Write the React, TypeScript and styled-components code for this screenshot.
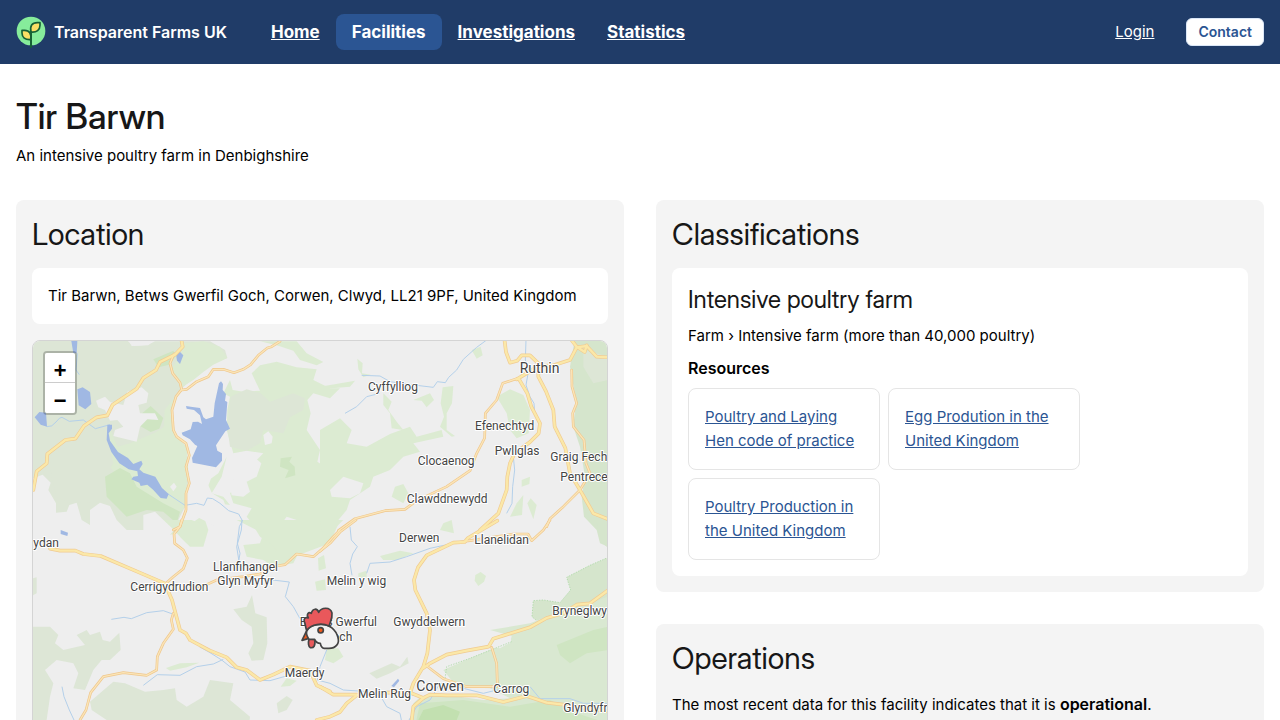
import React from "react";
import styled, { createGlobalStyle } from "styled-components";

const GlobalStyle = createGlobalStyle`
  *, *::before, *::after { box-sizing: border-box; }
  body { margin: 0; background: #fff; color: #000; font-family: Inter, "Liberation Sans", sans-serif; font-size: 15px; line-height: 24px; }
  h1, h2, h3, h4, p, ul { margin: 0; padding: 0; }
  strong { font-size: 16px; font-weight: 600; }
`;

const displayFont = `font-family: "Inter Display", Inter, sans-serif;`;

const TopBar = styled.header`
  display: flex; align-items: center; justify-content: space-between;
  min-height: 64px; padding: 0 16px; background: #203c68; color: #fff;
`;
const BarGroup = styled.div<{ $gap: number }>`
  display: flex; align-items: center; gap: ${(p) => p.$gap}px;
`;
const Brand = styled.a`
  display: flex; align-items: center; gap: 8px;
  color: #fff; font-size: 16px; font-weight: 600; text-decoration: none;
`;
const Nav = styled.nav`display: flex;`;
const NavLink = styled.a<{ $active?: boolean }>`
  padding: 4px 16px; border-radius: 8px; color: #fff;
  font-size: 17px; line-height: 28px; font-weight: 700;
  background: ${(p) => (p.$active ? "#2b5593" : "transparent")};
  text-decoration: ${(p) => (p.$active ? "none" : "underline")};
`;
const LoginLink = styled.a`color: #fff;`;
const ContactButton = styled.button`
  height: 28px; padding: 0 11px; border: 1px solid #dbe7f7; border-radius: 6px;
  background: #fff; color: #2b5593; font: 600 14px/20px Inter, sans-serif;
`;

const Page = styled.main`padding: 32px 16px;`;
const Intro = styled.div`display: flex; flex-direction: column; gap: 8px; margin-bottom: 32px;`;
const Title = styled.h1`${displayFont} font-size: 35px; line-height: 40px; font-weight: 500; color: #171717;`;
const Columns = styled.div`
  display: grid; grid-template-columns: repeat(2, minmax(0, 1fr)); gap: 32px; align-items: start;
`;
const Stack = styled.div`display: flex; flex-direction: column; gap: 32px;`;
const Card = styled.section`
  display: flex; flex-direction: column; gap: 16px; padding: 16px;
  border-radius: 8px; background: #f4f4f4;
`;
const CardTitle = styled.h2`${displayFont} font-size: 30px; line-height: 36px; font-weight: 400; color: #171717;`;
const Panel = styled.div`
  display: flex; flex-direction: column; gap: 8px; padding: 16px; border-radius: 8px; background: #fff;
`;
const PanelTitle = styled.h3`${displayFont} font-size: 24px; line-height: 32px; font-weight: 400; color: #171717;`;
const SmallTitle = styled.h4`font-size: 16px; font-weight: 600;`;
const Resources = styled.ul`display: flex; flex-wrap: wrap; gap: 8px; list-style: none;`;
const Resource = styled.li`
  width: 192px; padding: 16px; border: 1px solid #e5e5e5; border-radius: 8px;
`;
const ResourceLink = styled.a`color: #2b5593;`;

const MapFrame = styled.div`
  position: relative; height: 480px; overflow: hidden;
  border: 1px solid #d4d4d4; border-radius: 8px; background: #eee;
`;
const MapDrawing = styled.svg`display: block; width: 100%; height: 100%;`;
const ZoomControl = styled.div`
  position: absolute; top: 10px; left: 10px; display: flex; flex-direction: column;
  border: 2px solid rgba(0, 0, 0, 0.22); border-radius: 4px; background-clip: padding-box;
`;
const ZoomButton = styled.button`
  width: 30px; height: 30px; padding: 10px 0 0; border: 0; background: #fff; color: #000;
  font: bold 22px/20px "Liberation Mono", monospace;
  &:first-child { border-bottom: 1px solid #ccc; border-radius: 2px 2px 0 0; }
  &:last-child { border-radius: 0 0 2px 2px; }
`;
const PlaceName = styled.text<{ $town?: boolean }>`
  font-family: Roboto, sans-serif; font-size: ${(p) => (p.$town ? 42 : 36)}px;
  fill: #444; stroke: #fff; stroke-width: 6px; stroke-linejoin: round; paint-order: stroke;
`;

const LIGHT = "#dcebd2";
const PARK = "#dde6d6";
const DEEP = "#cfe5c2";
const WATER = "#a0b8e3";

const woods: [string, string][] = [
  // moorland and national park, north west
  [PARK, "M8 30H295L305 48 355 44 375 34H540L585 60 592 84 560 96 520 118 450 180 425 240 436 315 470 350 476 440 465 530 430 600H8Z"],
  [LIGHT, "M460 40L520 34 570 50 592 84 550 104 520 126 490 150 455 172 422 120 455 70Z"],
  [LIGHT, "M238 290L262 350 300 340 375 308 402 290 404 240 432 205 424 250 434 318 470 350 474 400 466 530 440 560 390 525 340 530 300 480 240 410 225 440 190 400 210 350Z"],
  [PARK, "M60 380L150 330 200 300 230 300 240 350 250 400 225 440 230 500 200 515 120 520 80 500 64 440Z"],
  [DEEP, "M225 440L270 414 300 430 320 470 400 520 450 545 440 580 400 545 350 540 290 560 230 500Z"],
  [DEEP, "M370 88L430 62 440 76 418 104 385 112Z"],
  [DEEP, "M322 262L362 228 400 264 388 296 362 306 330 288Z"],
  // forest east of the lake
  [LIGHT, "M600 150L608 180 640 185 690 182 665 130 690 106 740 95 800 112 860 118 850 150 900 175 930 175 900 205 850 190 832 210 842 250 830 300 870 360 862 395 900 420V600H850L835 620 800 570 770 560 740 600 700 620 650 560 665 535 610 520 600 490 640 450 660 410 700 370 650 362 610 370 590 300 592 240 600 200 580 190Z"],
  [PARK, "M602 200L650 178 692 190 720 215 790 190 825 205 820 240 780 262 760 310 700 300 690 340 650 362 600 350 592 290Z"],
  [LIGHT, "M590 380L575 440 545 490 580 500 600 525 560 520 530 455 565 430Z"],
  [DEEP, "M752 385L786 380 778 395 794 410 796 436 765 445 776 420 750 410Z"],
  [LIGHT, "M690 34H800L830 70 880 96 860 106 810 90 790 62 740 46Z"],
  [LIGHT, "M485 580L520 555 535 600 520 650 480 650 450 620Z"],
  // central woods
  [LIGHT, "M870 300L930 265 965 300 950 340 1010 350 1080 312 1140 290 1160 320 1235 300 1240 320 1150 340 1170 365 1120 380 1080 420 1030 440 1020 470 960 510 950 540 900 600 870 640Z"],
  ["#eee", "M900 480L940 440 1000 460 990 490 960 505 905 500Z"],
  [LIGHT, "M1095 470L1120 462 1135 490 1120 520 1085 500Z"],
  [LIGHT, "M1238 172L1270 168 1266 220 1250 250 1250 300 1275 318 1265 320 1230 290 1242 260 1232 220Z"],
  [LIGHT, "M1150 210L1200 190 1212 210 1190 232 1175 212Z"],
  [LIGHT, "M1400 200L1440 178 1480 195 1500 240 1496 310 1460 325 1440 300 1430 250Z"],
  [LIGHT, "M1060 190L1085 215 1075 240 1100 275 1120 300 1085 295 1080 250 1060 225Z"],
  [LIGHT, "M982 86L998 100 996 130 1022 134 1000 142 985 118Z"],
  [LIGHT, "M870 170L975 152 960 170 870 178Z"],
  [LIGHT, "M1325 60L1352 50 1358 76 1340 86Z"],
  [LIGHT, "M1440 560L1460 520 1480 495 1476 555Z"],
  [LIGHT, "M1502 505L1520 525 1510 568 1492 520Z"],
  [LIGHT, "M1240 580L1265 570 1272 610 1230 600Z"],
  [LIGHT, "M1475 450L1500 440 1498 462 1475 470Z"],
  // hills on the eastern edge
  ["#d5e5cc", "M1634 30H1735V650L1710 640 1700 600 1662 560 1655 500 1665 440 1650 350 1630 290 1638 210 1620 110Z"],
  [PARK, "M1660 60L1735 80V150L1690 160 1660 110Z"],
  // southern half
  [PARK, "M280 570H375L370 595 350 618 320 596 310 615 285 600Z"],
  [LIGHT, "M380 570H485L510 580 530 600 520 630 500 648 470 640 440 610 395 620Z"],
  [LIGHT, "M620 570H870L868 610 810 660 790 700 730 710 700 690 650 680 640 645 690 640 700 610Z"],
  [LIGHT, "M660 570H930L900 640 820 670 770 690 720 700 740 660 720 640 690 620Z"],
  [LIGHT, "M864 685L882 675 888 715 866 722Z"],
  [LIGHT, "M855 755L885 748 888 780 860 782Z"],
  [PARK, "M610 838L650 830 666 795 676 850 710 862 712 940 700 990 665 992 655 970 670 940 665 890 635 870Z"],
  [PARK, "M8 890L60 890 85 915 75 940 100 960 165 945 140 915 170 900 180 915 210 905 218 930 240 935 268 908 272 960 240 990 215 990 190 1020 165 1080 130 1075 145 1030 130 1000 80 990 45 1020 70 1060 60 1100 50 1170H8Z"],
  [PARK, "M180 1115L250 1055 285 1060 345 1085 400 1080 435 1075 440 1110 470 1130 520 1100 540 1050 610 1060 600 1110 660 1160 650 1240 170 1260 230 1170 185 1140Z"],
  [LIGHT, "M408 1014L450 1000 508 998 470 1012 420 1022Z"],
  [PARK, "M740 1120L770 1098 788 1110 770 1140 745 1150Z"],
  [LIGHT, "M752 1070L770 1045 800 1052 780 1068Z"],
  [PARK, "M8 745L20 742 20 790 8 796Z"],
  [LIGHT, "M890 955L925 955 940 980 910 1000 885 990Z"],
  [PARK, "M1018 1030L1085 1000 1110 1010 1132 980 1136 1000 1080 1030 1040 1046Z"],
  [LIGHT, "M1336 735L1352 726 1368 738 1362 755 1345 768 1334 752Z"],
  [LIGHT, "M870 570H940L920 590 880 620Z"],
  [LIGHT, "M985 730L1010 722 1010 742 985 745Z"],
  [LIGHT, "M1050 678L1110 662 1150 670 1100 690 1060 690Z"],
  ["#d5e5cc", "M1700 570H1735V655L1710 632 1702 590Z"],
  // Dee valley and Llantysilio
  ["#d5e5cc", "M1735 682L1680 706 1610 742 1622 780 1590 818 1540 810 1510 812 1506 860 1520 872 1540 865 1700 850 1735 800Z"],
  ["#d9e8d1", "M1520 872L1735 800V1280H1140L1150 1120 1170 1102 1250 1095 1360 1110 1440 1105 1380 1075 1280 1070 1240 1020 1320 985 1380 960 1440 940 1445 918 1380 900 1500 880Z"],
  [DEEP, "M1580 945L1690 900 1735 890V960L1670 970 1620 1000 1590 975Z"],
  [DEEP, "M1170 1120L1300 1110 1440 1130 1560 1110 1640 1150 1735 1180V1260H1140Z"],
  ["#c2e0b0", "M1180 1140L1240 1125 1290 1145 1280 1170 1300 1200H1150Z"],
  // clearings
  ["#eee", "M198 212L225 200 240 216 280 225 292 185 335 172 355 190 350 218 325 225 330 250 375 250 385 270 352 268 330 290 320 335 250 318 255 300 280 290 262 270 240 272 225 240 205 232Z"],
  ["#eee", "M290 30H370L355 46 310 48Z"],
  ["#eee", "M8 445L38 434 62 458 55 480 78 520 78 548 110 545 118 525 140 518 155 570 180 585 180 540 210 518 240 528 260 570 290 600 340 600 340 555 375 545 390 560 432 600 400 640H8Z"],
  ["#eee", "M470 350L490 370 520 400 560 410 545 440 530 480 580 510 600 560 560 590 500 560 475 540 478 440Z"],
  ["#eee", "M700 315L715 304 728 320 725 340 705 345Z"],
  ["#eee", "M1390 950L1440 918 1444 935 1410 955Z"],
  ["#eee", "M420 470L432 458 440 470 430 484Z"],
  ["#eee", "M600 470L625 425 680 388 694 400 680 440 650 455 660 485 640 500 605 496Z"],
];

const lakes = [
  "M124 33H142L140 70H130Z",
  "M142 178L158 172 180 186 184 222 166 238 146 226Z",
  "M14 262L28 246 48 248 51 290 32 284Z",
  "M438 72L448 64 460 76 450 102 441 92Z",
  "M567 160L573 154 579 162 578 180 588 192 585 212 592 216 588 270 600 296 586 304 558 346 562 362 576 370 576 392 558 412 488 398 486 384 502 348 495 344 480 328 458 316 455 308 482 298 488 276 504 275 516 282 510 256 492 240 470 236 468 228 482 230 510 234 520 262 528 268 550 260 554 220Z",
  "M232 284L246 284 246 296 236 310 240 332 264 366 294 384 310 402 334 392 338 402 328 418 340 428 376 440 396 474 416 492 410 506 392 504 370 480 352 464 332 468 328 458 304 448 310 440 324 438 322 424 296 418 268 400 244 366 230 330Z",
  "M92 600L114 608 112 618 92 612Z",
  "M1084 1068L1104 1046 1108 1052 1092 1072Z",
];

const rivers = [
  "M51 290Q66 292 78 276T96 262L118 274 160 270 196 296 240 284",
  "M142 70L138 120 148 134",
  "M414 492L465 526 500 520 522 526 532 504 548 506 570 520 596 542 626 552 636 570 634 600 620 650 628 700",
  "M1370 30L1340 52 1300 88 1280 120 1256 142 1246 158 1222 155 1210 172 1160 166 1080 155 1050 138 995 136",
  "M1050 190L1010 200 980 230 945 250",
  "M1488 30L1486 90 1496 120 1488 165 1500 200 1512 220 1514 250 1532 290",
  "M1450 380L1454 420 1448 470 1446 520 1430 550",
  "M244 868L282 862 304 866 350 848 400 842 428 852",
  "M340 1066L382 1034 450 1036 500 1010 550 1002 580 988",
  "M508 950L540 968 575 990 600 1010 645 1026 660 1050 720 1052 790 1032",
  "M96 1070L102 1100 118 1140 132 1170",
  "M638 570L628 590 622 640 630 670 625 700",
  "M728 750L778 756 766 800 790 830 810 866",
  "M960 590L964 630 982 650 968 672 960 700 966 736",
  "M1010 730L1020 700 1080 696 1130 680 1200 655 1270 640",
  "M890 960L870 1010 862 1050 900 1060 940 1080 1000 1084 1090 1084 1170 1100",
  "M1050 1095L1070 1130 1110 1150 1116 1180",
  "M1120 1200L1160 1130 1200 1110 1230 1060 1300 1075 1360 1090 1400 1080 1500 1070 1530 1106 1620 1106 1660 1120 1735 1120",
];

const minorRoads = [
  "M432 72L420 100 428 130 450 158 455 178 438 200 426 240 430 300 440 320 468 340 478 376 468 410 478 460 468 490 468 540 450 590 430 600",
  "M455 180L470 178 500 155 535 140 550 118 580 118 612 128 640 118 662 104 685 76 712 54 725 50 750 34",
  "M455 570L450 590 432 612 434 640 460 660 472 684 460 716 430 740 408 760",
  "M430 850L424 870 430 898 400 940 382 980 380 1020 350 1036 280 1028 220 1040 182 1088 168 1140 150 1170",
  "M500 770L530 764 560 750 640 740 690 732 740 708 765 704 800 672 850 680 880 654 910 620 930 600",
  "M925 602L975 566 1065 542 1125 538 1160 512 1250 470 1320 422 1340 370 1364 324 1366 250 1400 210 1418 160 1460 146",
  "M1625 120L1626 170 1640 220 1628 250 1630 290 1662 330 1668 400 1680 430 1650 480 1600 530 1560 566 1550 590",
  "M870 664L900 640 930 606 978 570",
  "M1560 570L1540 600 1505 632 1494 612 1450 612 1320 632 1290 636",
  "M1385 952L1400 1000 1402 1060",
  "M1190 1008L1240 1046 1310 1070 1400 1070",
];

const mainRoads = [
  "M455 34L458 50 435 74 390 96 378 120 340 144 320 176 248 224 232 256 200 262 162 288 136 326 106 330 52 372 50 400 20 424 10 480",
  "M60 656L90 662 136 662 160 672 212 678 320 724 404 760 426 810 450 900 468 910 480 930 540 962 590 982 620 1012 650 1020 690 1050 730 1034 780 1010 840 1022 860 1066 900 1084",
  "M1424 34L1428 66 1440 98 1462 92 1475 76 1500 76 1525 100 1525 140 1548 184 1570 240 1574 290 1606 354 1620 430 1650 480 1690 550 1735 568",
  "M1466 146L1492 190 1504 230 1530 280 1526 310 1500 336 1454 370 1440 400 1432 440 1430 480 1405 550 1350 600",
  "M1460 148L1490 130 1525 108 1570 106 1620 90 1640 52 1670 48 1700 80 1735 82",
  "M1626 32L1640 50 1664 66 1670 46",
  "M1402 572L1314 624 1304 636 1270 638 1190 676 1164 712 1152 750 1156 780 1190 850 1200 900 1192 970 1180 1010 1150 1060 1140 1090",
  "M1735 780L1680 820 1640 824 1600 850 1550 864 1500 892 1390 926 1376 950 1310 962 1250 974 1200 1000 1180 1014",
  "M870 1070L910 1094 1000 1094 1060 1088 1140 1088 1180 1104 1200 1094 1250 1096 1340 1096 1420 1116 1490 1098 1550 1118 1600 1124 1735 1144",
  "M980 1096L950 1120 930 1146 900 1160 860 1170",
  "M1180 1104L1150 1130 1144 1180",
];

const places: [string, number, number, boolean?][] = [
  ["Cyffylliog", 1014, 184], ["Ruthin", 1469, 130, true], ["Efenechtyd", 1335, 300],
  ["Pwllglas", 1394, 376], ["Graig Fecha", 1561, 394], ["Pentrecel", 1591, 453],
  ["Clocaenog", 1163, 405], ["Clawddnewydd", 1130, 520], ["ydan", 10, 650],
  ["Llanfihangel", 549, 722], ["Glyn Myfyr", 562, 766], ["Cerrigydrudion", 301, 783],
  ["Derwen", 1107, 635], ["Llanelidan", 1333, 641], ["Melin y wig", 890, 766],
  ["Betws Gwerful", 809, 889], ["Goch", 883, 933], ["Gwyddelwern", 1090, 889],
  ["Bryneglwys", 1567, 856], ["Maerdy", 764, 1042], ["Corwen", 1159, 1082, true],
  ["Melin Rûg", 984, 1104], ["Carrog", 1390, 1089], ["Glyndyfrd", 1600, 1146],
];

function BrandMark() {
  return (
    <svg width="30" height="32" viewBox="48 48 90 96" aria-hidden="true">
      <circle cx="93" cy="93" r="43" fill="#86ec9b" />
      <g stroke="#166034" strokeWidth="5" strokeLinejoin="round">
        <path d="M93 96C89 78 96 68 112 68H120V76C120 90 110 98 93 96Z" fill="#fade65" />
        <path d="M92 119C95 101 88 91 74 91H66V99C66 112 75 120 92 119Z" fill="#fade65" />
        <path d="M93 94V143" fill="none" strokeWidth="6" />
      </g>
    </svg>
  );
}

function RoosterMarker() {
  return (
    <g transform="translate(750 780)" stroke="#444" strokeWidth="5" strokeLinejoin="round" strokeLinecap="round">
      <path d="M80 122L66 151 87 145Z" fill="#f05a1c" />
      <path d="M87 147C84 158 85 171 91 173C101 175 107 168 104 148Z" fill="#e85a5c" />
      <path d="M80 124C86 108 102 103 123 103C148 102 168 119 174 143C179 160 168 175 147 175H133C124 174 122 166 121 160C113 160 107 155 104 148H87C82 141 78 133 80 124Z" fill="#f2f2f2" />
      <path d="M80 121C76 113 77 103 73 95C70 86 77 80 85 84C78 72 86 64 94 70C98 54 112 54 116 67C124 51 151 50 156 69C158 86 151 95 147 108C125 98 96 102 80 121Z" fill="#e9585b" />
      <circle cx="122" cy="121" r="8" fill="#f05a1c" />
    </g>
  );
}

function FarmMap() {
  return (
    <MapFrame>
      <MapDrawing viewBox="9 33 1722 1434" preserveAspectRatio="xMidYMin slice" role="img" aria-label="Map of the area around Tir Barwn">
        <rect x="0" y="0" width="1800" height="1500" fill="#eeeeee" />
        {woods.map(([fill, d], i) => <path key={i} d={d} fill={fill} />)}
        <path d="M1735 682L1680 706 1610 742 1622 780 1590 818 1540 810 1510 812 1506 860 1520 872M1445 935L1320 985 1250 1010 1245 1046" fill="none" stroke="#b4dcae" strokeWidth="3" strokeDasharray="4 4" />
        <g fill="none" stroke="#b4d0ea" strokeWidth="3" strokeLinejoin="round">
          {rivers.map((d) => <path key={d} d={d} />)}
        </g>
        {lakes.map((d) => <path key={d} d={d} fill={WATER} />)}
        <g fill="none" strokeLinejoin="round" strokeLinecap="round">
          {minorRoads.map((d) => <path key={d} d={d} stroke="#efc78c" strokeWidth="8" />)}
          {mainRoads.map((d) => <path key={d} d={d} stroke="#f0cb92" strokeWidth="11" />)}
          {minorRoads.map((d) => <path key={d} d={d} stroke="#fbe5b8" strokeWidth="4" />)}
          {mainRoads.map((d) => <path key={d} d={d} stroke="#fbe8a8" strokeWidth="7" />)}
        </g>
        {places.map(([name, x, y, town]) => (
          <PlaceName key={name} x={x} y={y} $town={town}>{name}</PlaceName>
        ))}
        <RoosterMarker />
      </MapDrawing>
      <ZoomControl>
        <ZoomButton type="button" aria-label="Zoom in">+</ZoomButton>
        <ZoomButton type="button" aria-label="Zoom out">−</ZoomButton>
      </ZoomControl>
    </MapFrame>
  );
}

const resources = [
  "Poultry and Laying Hen code of practice",
  "Egg Prodution in the United Kingdom",
  "Poultry Production in the United Kingdom",
];

export default function App() {
  return (
    <>
      <GlobalStyle />
      <TopBar>
        <BarGroup $gap={28}>
          <Brand href="#"><BrandMark />Transparent Farms UK</Brand>
          <Nav>
            <NavLink href="#">Home</NavLink>
            <NavLink href="#" $active aria-current="page">Facilities</NavLink>
            <NavLink href="#">Investigations</NavLink>
            <NavLink href="#">Statistics</NavLink>
          </Nav>
        </BarGroup>
        <BarGroup $gap={32}>
          <LoginLink href="#">Login</LoginLink>
          <ContactButton type="button">Contact</ContactButton>
        </BarGroup>
      </TopBar>
      <Page>
        <Intro>
          <Title>Tir Barwn</Title>
          <p>An intensive poultry farm in Denbighshire</p>
        </Intro>
        <Columns>
          <Card>
            <CardTitle>Location</CardTitle>
            <Panel><p>Tir Barwn, Betws Gwerfil Goch, Corwen, Clwyd, LL21 9PF, United Kingdom</p></Panel>
            <FarmMap />
          </Card>
          <Stack>
            <Card>
              <CardTitle>Classifications</CardTitle>
              <Panel>
                <PanelTitle>Intensive poultry farm</PanelTitle>
                <p>Farm › Intensive farm (more than 40,000 poultry)</p>
                <SmallTitle>Resources</SmallTitle>
                <Resources>
                  {resources.map((r) => (
                    <Resource key={r}><ResourceLink href="#">{r}</ResourceLink></Resource>
                  ))}
                </Resources>
              </Panel>
            </Card>
            <Card>
              <CardTitle>Operations</CardTitle>
              <p>The most recent data for this facility indicates that it is <strong>operational</strong>.</p>
            </Card>
          </Stack>
        </Columns>
      </Page>
    </>
  );
}
